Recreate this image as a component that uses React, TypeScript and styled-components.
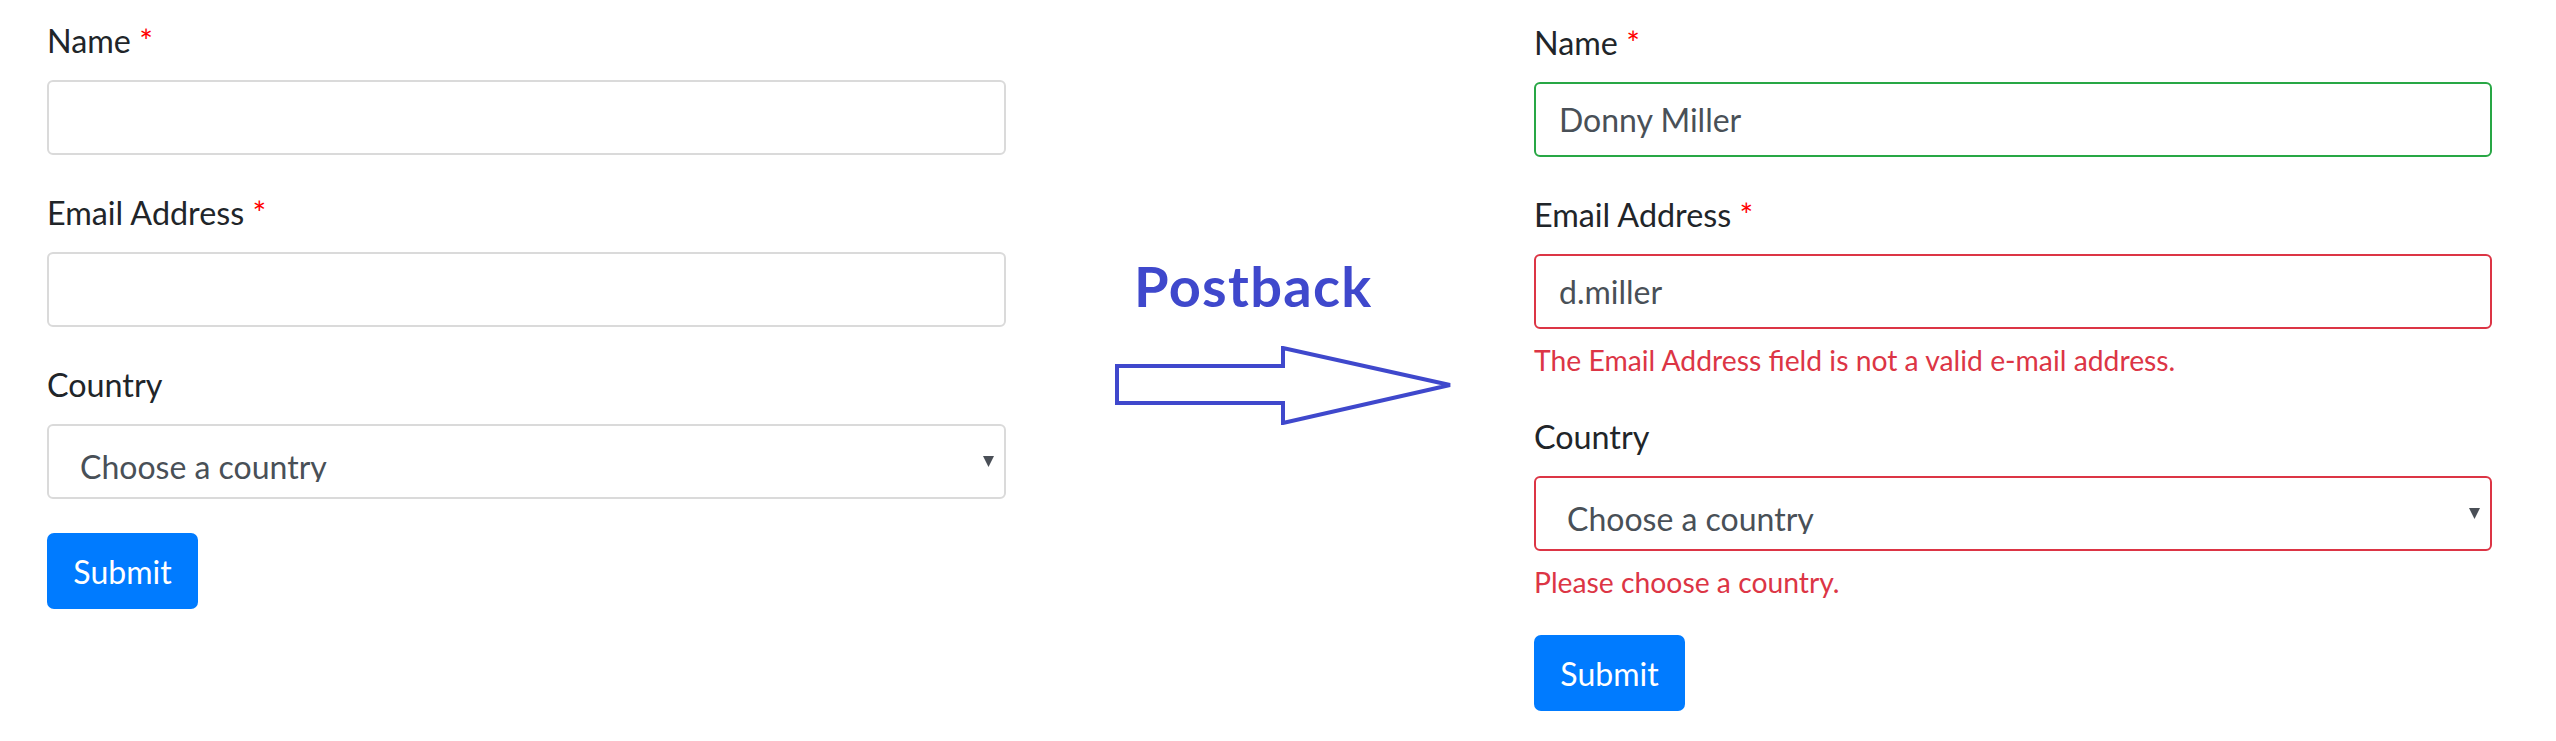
import React from "react";
import styled, { createGlobalStyle } from "styled-components";

type FieldState = "default" | "valid" | "invalid";

const borderFor = (s: FieldState) =>
  s === "valid" ? "#28a745" : s === "invalid" ? "#dc3545" : "#dadada";

const GlobalStyle = createGlobalStyle`
  html, body { margin: 0; padding: 0; background: #ffffff; }
  body { font-family: Lato, "Open Sans", sans-serif; }
`;

const Page = styled.div`
  display: flex;
  align-items: flex-start;
  width: 2556px;
  height: 741px;
  padding-left: 47px;
  box-sizing: border-box;
  background: #ffffff;
  overflow: hidden;
`;

const Form = styled.form<{ $top: number; $width: number }>`
  flex: none;
  width: ${(p) => p.$width}px;
  display: flex;
  flex-direction: column;
  gap: 34px;
  padding-top: ${(p) => p.$top}px;
  margin: 0;
`;

const Group = styled.div`
  display: flex;
  flex-direction: column;
`;

const Label = styled.label`
  font-size: 32.3px;
  line-height: 48px;
  color: #212529;
  margin-bottom: 15px;
`;

const Req = styled.span`
  color: #ff0000;
`;

const TextField = styled.input<{ $state: FieldState }>`
  box-sizing: border-box;
  width: 100%;
  height: 75px;
  margin: 0;
  padding: 0 23px;
  border: 2px solid ${(p) => borderFor(p.$state)};
  border-radius: 6px;
  background: #ffffff;
  font-family: Lato, "Open Sans", sans-serif;
  font-size: 32px;
  color: #495057;
  outline: none;
`;

const SelectBox = styled.div<{ $state: FieldState }>`
  box-sizing: border-box;
  display: flex;
  align-items: flex-start;
  height: 75px;
  border: 2px solid ${(p) => borderFor(p.$state)};
  border-radius: 6px;
  background: #ffffff;
  overflow: hidden;
`;

const SelectValue = styled.span`
  flex: 1;
  display: block;
  box-sizing: border-box;
  height: 56px;
  padding: 22px 0 0 31px;
  overflow: hidden;
  font-size: 32px;
  line-height: 38px;
  color: #495057;
  white-space: nowrap;
`;

const Caret = styled.svg`
  flex: none;
  width: 11px;
  height: 11px;
  margin: 30px 10px 0 0;
`;

const Feedback = styled.div`
  margin-top: 12px;
  font-size: 28.3px;
  line-height: 38px;
  color: #dc3545;
`;

const SubmitButton = styled.button`
  align-self: flex-start;
  box-sizing: border-box;
  width: 151px;
  height: 76px;
  padding: 0;
  border: none;
  border-radius: 7px;
  background: #007bff;
  color: #ffffff;
  font-family: Lato, "Open Sans", sans-serif;
  font-size: 32px;
  cursor: pointer;
`;

const Middle = styled.div`
  flex: none;
  width: 528px;
  display: flex;
  flex-direction: column;
  align-items: flex-start;
  padding-top: 258px;
`;

const PostbackTitle = styled.div`
  margin-left: 128px;
  font-family: Lato, "Open Sans", sans-serif;
  font-weight: 700;
  font-size: 56px;
  line-height: 56px;
  letter-spacing: 1.3px;
  color: #3f48cc;
`;

const ArrowSvg = styled.svg`
  margin-top: 32px;
  margin-left: 109px;
  width: 337px;
  height: 79px;
`;

const Select = ({ state, value }: { state: FieldState; value: string }) => (
  <SelectBox $state={state} role="combobox" aria-label="Country">
    <SelectValue>{value}</SelectValue>
    <Caret viewBox="0 0 11 11" aria-hidden="true">
      <polygon points="0,0 11,0 5.5,11" fill="#4a4f57" />
    </Caret>
  </SelectBox>
);

const BlankForm = () => (
  <Form $top={17} $width={959} onSubmit={(e) => e.preventDefault()}>
    <Group>
      <Label>
        Name <Req>*</Req>
      </Label>
      <TextField $state="default" readOnly value="" />
    </Group>
    <Group>
      <Label>
        Email Address <Req>*</Req>
      </Label>
      <TextField $state="default" readOnly value="" />
    </Group>
    <Group>
      <Label>Country</Label>
      <Select state="default" value="Choose a country" />
    </Group>
    <SubmitButton type="submit">Submit</SubmitButton>
  </Form>
);

const PostedForm = () => (
  <Form $top={19} $width={958} onSubmit={(e) => e.preventDefault()}>
    <Group>
      <Label>
        Name <Req>*</Req>
      </Label>
      <TextField $state="valid" readOnly value="Donny Miller" />
    </Group>
    <Group>
      <Label>
        Email Address <Req>*</Req>
      </Label>
      <TextField $state="invalid" readOnly value="d.miller" />
      <Feedback>The Email Address field is not a valid e-mail address.</Feedback>
    </Group>
    <Group>
      <Label>Country</Label>
      <Select state="invalid" value="Choose a country" />
      <Feedback>Please choose a country.</Feedback>
    </Group>
    <SubmitButton type="submit">Submit</SubmitButton>
  </Form>
);

export default function App() {
  return (
    <>
      <GlobalStyle />
      <Page>
        <BlankForm />
        <Middle>
          <PostbackTitle>Postback</PostbackTitle>
          <ArrowSvg viewBox="0 0 337 79" aria-hidden="true">
            <polygon
              points="2,20 168,20 168,2 335,39 168,77 168,57 2,57"
              fill="#ffffff"
              stroke="#3f48cc"
              strokeWidth={4}
              strokeLinejoin="miter"
            />
          </ArrowSvg>
        </Middle>
        <PostedForm />
      </Page>
    </>
  );
}
